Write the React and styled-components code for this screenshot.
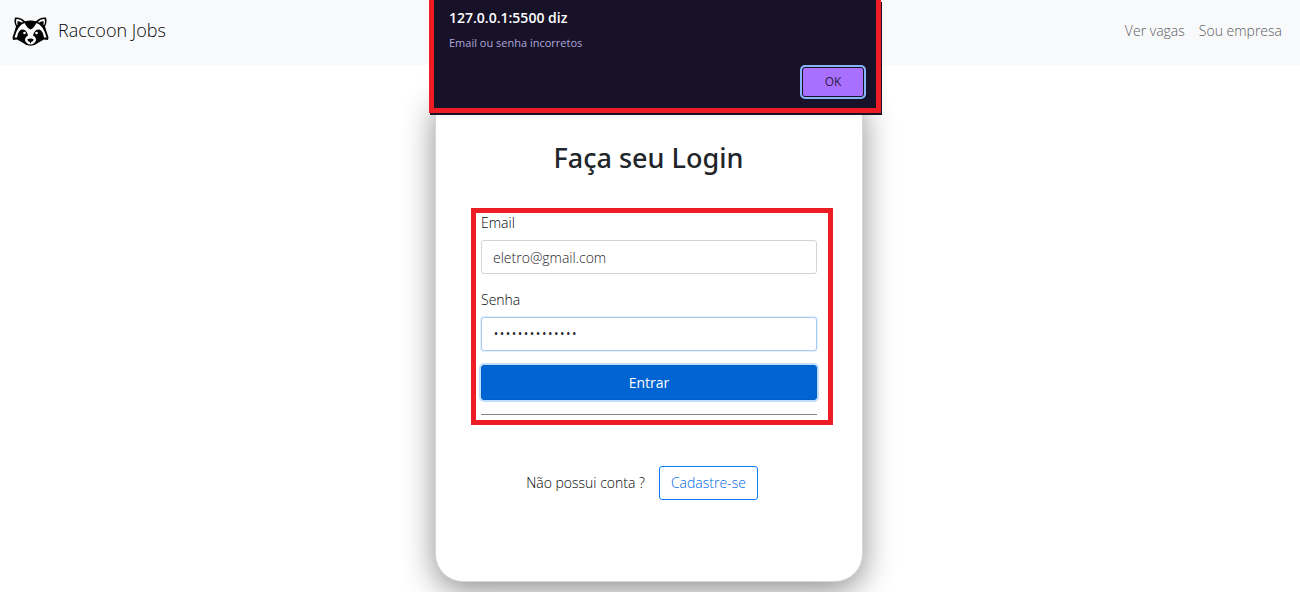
import React from "react";
import styled, { createGlobalStyle } from "styled-components";

const GlobalStyle = createGlobalStyle`
  *, *::before, *::after { box-sizing: border-box; }
  body {
    margin: 0;
    background: #fff;
    color: #050709;
    font-family: "Open Sans", "Noto Sans", sans-serif;
    font-size: 14px;
    font-weight: 300;
    line-height: 20px;
  }
  button, input { font: inherit; }
  h1, h2, p { margin: 0; }
`;

const Page = styled.div`
  min-height: 100vh;
`;

const Navbar = styled.header`
  display: flex;
  align-items: center;
  justify-content: space-between;
  height: 65px;
  padding: 0 18px 0 12px;
  background: #f8f9fb;
`;

const Brand = styled.a`
  display: flex;
  align-items: center;
  gap: 9px;
  padding-bottom: 6px;
  color: #050709;
  font-size: 18px;
  line-height: 28px;
  text-decoration: none;

  svg { display: block; margin-top: 3px; }
`;

const NavLinks = styled.nav`
  display: flex;
  gap: 14px;
  padding-bottom: 4px;
`;

const NavLink = styled.a`
  color: #5c5d5f;
  text-decoration: none;
`;

const Main = styled.main`
  display: flex;
  justify-content: center;
  padding: 25px 2px 10px 0;
`;

const Card = styled.section`
  width: 100%;
  max-width: 428px;
  padding: 47px 29px 81px 35px;
  border: 1px solid #d6d6d6;
  border-radius: 28px;
  background: #fff;
  box-shadow: 0 8px 32px rgba(0, 0, 0, 0.45);
`;

const Title = styled.h1`
  padding-right: 7px;
  color: #212529;
  font-family: "Noto Sans", "Open Sans", sans-serif;
  font-size: 27px;
  font-weight: 500;
  line-height: 40px;
  text-align: center;
`;

const LoginForm = styled.form`
  display: flex;
  flex-direction: column;
  margin-top: 30px;
  padding: 0 11px 5px 5px;
  border: 5px solid #ee1c25;
`;

const Field = styled.div`
  display: flex;
  flex-direction: column;
  gap: 7px;
  margin-bottom: ${({ $gap }) => $gap};
`;

const Label = styled.label`
  line-height: 20px;
`;

const TextInput = styled.input`
  width: 100%;
  height: 34px;
  padding: 0 11px;
  border: 1px solid ${({ $active }) => ($active ? "#a9cbee" : "#ced4da")};
  border-radius: 3px;
  outline: none;
  background: #fff;
  color: #1f252b;
  box-shadow: ${({ $active }) => ($active ? "0 0 0 1px #e3f0fd" : "none")};

  &[type="password"] {
    font-size: 16px;
  }
`;

const SubmitButton = styled.button`
  height: 35px;
  padding: 0 11px;
  border: 1px solid #005ec4;
  border-radius: 3px;
  background: #0064d2;
  color: #fff;
  font-weight: 400;
  box-shadow: 0 0 0 2px #bfdfff;
`;

const Divider = styled.hr`
  width: 100%;
  height: 1px;
  margin: 14px 0 0;
  border: 0;
  background: #858585;
`;

const SignUp = styled.div`
  display: flex;
  align-items: center;
  justify-content: center;
  gap: 14px;
  margin-top: 41px;
  padding-right: 20px;
`;

const SignUpLink = styled.a`
  padding: 6px 11px;
  border: 1px solid #0b7dfa;
  border-radius: 3px;
  color: #0068e8;
  text-decoration: none;
`;

const Alert = styled.div`
  position: absolute;
  top: 0;
  left: calc(50% - 221px);
  display: flex;
  flex-direction: column;
  width: 452px;
  max-width: 100%;
  padding: 8px 10px 11px 15px;
  border: solid #ee1c25;
  border-width: 0 5px 5px;
  background: #171228;
  box-shadow: 1px 2px 0 #171228;
`;

const AlertTitle = styled.h2`
  color: #fff;
  font-size: 14px;
  font-weight: 600;
  line-height: 20px;
`;

const AlertText = styled.p`
  margin-top: 6px;
  color: #b0a7dc;
  font-size: 11px;
  font-weight: 400;
  line-height: 18px;
`;

const AlertButton = styled.button`
  align-self: flex-end;
  width: 62px;
  height: 30px;
  margin: 15px 2px 0 0;
  padding: 0;
  border: 1px solid #171228;
  border-radius: 3px;
  background: #a970ff;
  color: #2b1b4a;
  font-size: 12px;
  font-weight: 400;
  box-shadow: 0 0 0 2px #85b4f8;
`;

function RaccoonLogo() {
  return (
    <svg width="37" height="29" viewBox="0 0 37 29" aria-hidden="true">
      <path
        fill="#050505"
        d="M3 .5C6.500 0 10.500 1.200 13 4.300Q18.500 2.800 24 4.300C26.500 1.200 30.500 0 34 .5Q35.500 5 33 9.500L36.500 20.500 36 23 32 22.500 27.500 25Q23 28.700 18.500 28.700T9.500 25L5 22.500 1 23 .5 20.500 4 9.500Q1.500 5 3 .5Z"
      />
      <path
        fill="#fff"
        d="M4.500 1.900Q8.500 1.700 11.200 4.900L9.800 5.600Q7.500 4 5.300 4.200Q5.200 6 5.700 7.500L4.800 8.100Q3.200 5 4.500 1.900ZM32.500 1.900Q28.500 1.700 25.800 4.900L27.200 5.600Q29.500 4 31.700 4.200Q31.800 6 31.300 7.500L32.200 8.100Q33.800 5 32.500 1.900Z"
      />
      <path
        fill="#fff"
        d="M12.500 6Q15.500 11.500 18.500 12.500Q21.500 11.500 24.500 6Q31.500 8.500 34.500 20.500L32 20.500Q31 14 27.500 12.600Q22.500 12 21 18.500Q24.300 20.500 24 23.500Q22 27.500 18.500 27.500T13 23.500Q12.700 20.500 16 18.500Q14.500 12 9.500 12.600Q6 14 5 20.500L2.500 20.500Q5.500 8.500 12.500 6Z"
      />
      <path
        fill="#050505"
        d="M15.300 22.300Q18.500 20.600 21.700 22.300Q21.500 25 19 25.300V26.300H18V25.300Q15.500 25 15.300 22.300Z"
      />
      <circle cx="12.500" cy="16" r="1.300" fill="#fff" />
      <circle cx="24.500" cy="16" r="1.300" fill="#fff" />
    </svg>
  );
}

export default function App() {
  return (
    <Page>
      <GlobalStyle />
      <Navbar>
        <Brand href="#">
          <RaccoonLogo />
          Raccoon Jobs
        </Brand>
        <NavLinks>
          <NavLink href="#vagas">Ver vagas</NavLink>
          <NavLink href="#empresa">Sou empresa</NavLink>
        </NavLinks>
      </Navbar>
      <Main>
        <Card>
          <Title>Faça seu Login</Title>
          <LoginForm onSubmit={(event) => event.preventDefault()}>
            <Field $gap="16px">
              <Label htmlFor="email">Email</Label>
              <TextInput id="email" type="email" defaultValue="eletro@gmail.com" />
            </Field>
            <Field $gap="14px">
              <Label htmlFor="senha">Senha</Label>
              <TextInput id="senha" type="password" defaultValue="raccoonjobs123" $active />
            </Field>
            <SubmitButton type="submit">Entrar</SubmitButton>
            <Divider />
          </LoginForm>
          <SignUp>
            <span>Não possui conta ?</span>
            <SignUpLink href="#cadastro">Cadastre-se</SignUpLink>
          </SignUp>
        </Card>
      </Main>
      <Alert role="alertdialog" aria-labelledby="alert-title" aria-describedby="alert-text">
        <AlertTitle id="alert-title">127.0.0.1:5500 diz</AlertTitle>
        <AlertText id="alert-text">Email ou senha incorretos</AlertText>
        <AlertButton type="button">OK</AlertButton>
      </Alert>
    </Page>
  );
}
